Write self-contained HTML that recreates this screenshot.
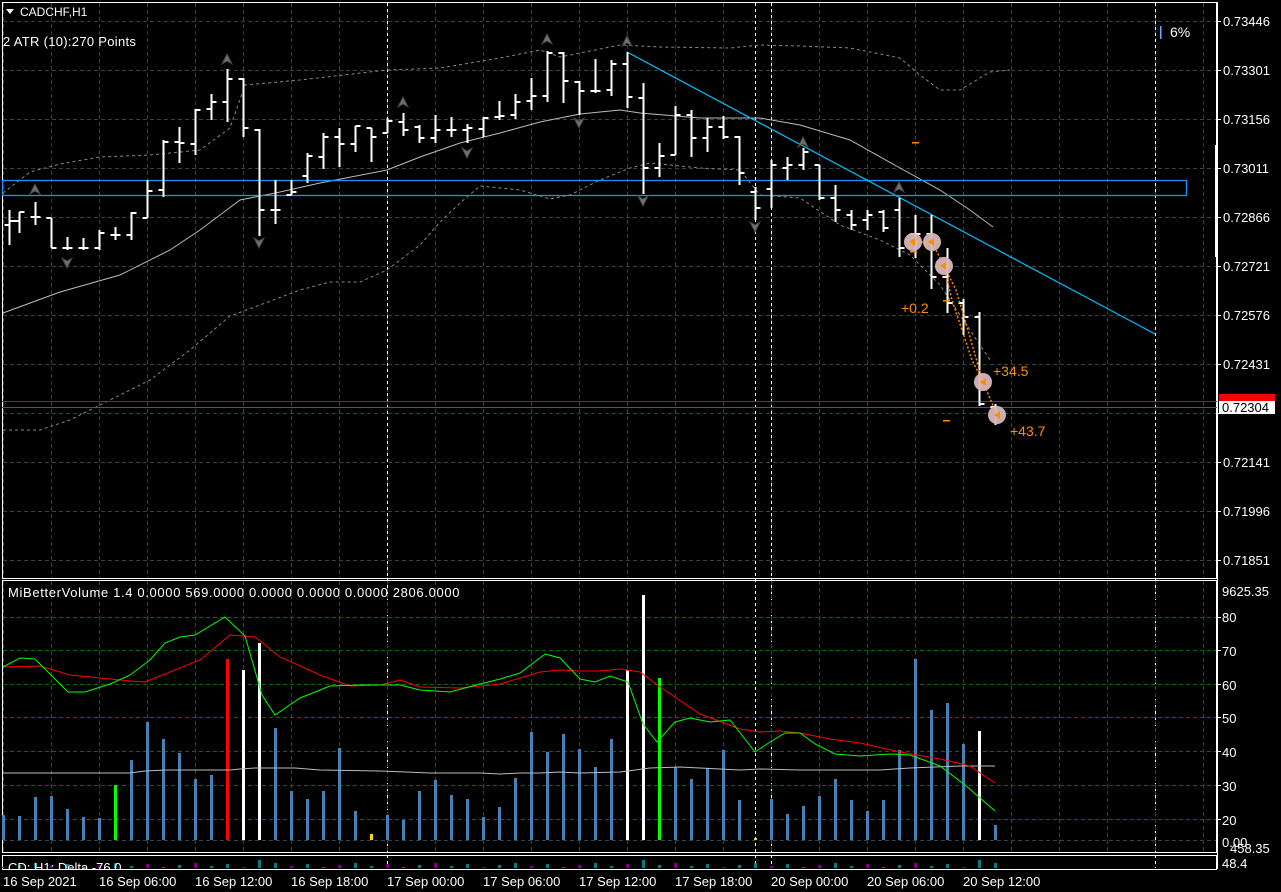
<!DOCTYPE html>
<html><head><meta charset="utf-8"><style>
html,body{margin:0;padding:0;background:#000;width:1281px;height:892px;overflow:hidden}
svg{display:block}
text{font-family:"Liberation Sans","DejaVu Sans",sans-serif;font-size:12px;fill:#fff}
</style></head><body>
<svg id="s" width="1281" height="892" viewBox="0 0 1281 892" xmlns="http://www.w3.org/2000/svg">
<rect width="1281" height="892" fill="#000"/>
<g id="grid"></g>
<rect x="2.5" y="2.5" width="1214" height="576" fill="none" stroke="#fff" stroke-width="1"/>
<rect x="2.5" y="580.5" width="1214" height="272" fill="none" stroke="#fff" stroke-width="1"/>
<rect x="2.5" y="855.5" width="1214" height="20" fill="none" stroke="#fff" stroke-width="1"/>
<rect x="0" y="869" width="1281" height="23" fill="#000"/>
<line x1="2" y1="869.5" x2="1217" y2="869.5" stroke="#fff"/>
<line x1="1217.5" y1="2" x2="1217.5" y2="869" stroke="#fff"/>
<polyline fill="none" stroke="#bbb" stroke-width="1" points="3,313 60,292 120,275 170,250 200,230 240,200 280,192 320,183 387,170 420,157 460,143 500,133 540,122 580,114 620,110 640,113 700,118 760,118 800,125 850,140 900,168 940,190 970,210 993,227"/>
<polyline fill="none" stroke="#888" stroke-width="1" stroke-dasharray="3,3" points="3,193 30,172 60,164 100,157 150,155 200,150 230,128 245,85 300,80 387,70 440,68 500,58 540,50 560,57 620,45 660,47 730,48 760,45 800,46 850,48 900,58 920,75 940,90 960,90 990,72 1010,70"/>
<polyline fill="none" stroke="#888" stroke-width="1" stroke-dasharray="3,3" points="3,430 40,430 70,420 110,400 150,380 190,350 230,316 260,305 300,290 330,282 360,282 387,270 420,245 440,222 460,203 480,186 520,190 550,199 570,195 600,180 630,168 650,163 700,168 740,170 760,195 800,198 840,225 880,240 910,255 940,285 970,330 990,360"/>
<rect x="2.5" y="180.5" width="1184" height="15" fill="none" stroke="#1e8fff" stroke-width="1.3"/>
<line x1="627" y1="52" x2="1155" y2="334" stroke="#00bfff" stroke-width="1.2"/>
<line x1="2" y1="401.5" x2="1217" y2="401.5" stroke="#e00000"/>
<line x1="2" y1="407.5" x2="1217" y2="407.5" stroke="#4a5a5a"/>
<g id="bars" stroke="#fff" stroke-width="2"></g>
<g id="arrows"></g>
<polyline fill="none" stroke="#ff8c00" stroke-width="1.5" stroke-dasharray="2,2" points="913,242 932,242 944,266 956,290 965,320 983,382 997,415"/>
<polyline fill="none" stroke="#ff8c00" stroke-width="1.5" stroke-dasharray="2,2" points="944,266 952,300 962,330 972,360 983,382"/>
<g fill="#d8b8b8" opacity="0.95">
<circle cx="913" cy="242" r="9"/><circle cx="932" cy="242" r="9"/><circle cx="944" cy="266" r="9"/><circle cx="983" cy="382" r="9"/><circle cx="997" cy="415" r="9"/>
</g>
<g fill="#ff8c00">
<path d="M909,242 l6,-4 v8z"/><path d="M928,242 l6,-4 v8z"/><path d="M940,266 l6,-4 v8z"/><path d="M980,382 l6,-4 v8z"/><path d="M994,415 l6,-4 v8z"/>
<rect x="912" y="142" width="7" height="1.5"/><rect x="943" y="420" width="7" height="1.5"/><rect x="943" y="300" width="7" height="1.5"/><rect x="910" y="251" width="7" height="1.5"/>
</g>
<text x="901" y="313" style="fill:#ff8c00;font-size:14px">+0.2</text>
<text x="993" y="376" style="fill:#ff8c00;font-size:14px">+34.5</text>
<text x="1010" y="436" style="fill:#ff8c00;font-size:14px">+43.7</text>
<path d="M6,9 h8 l-4,5z" fill="#fff"/>
<text x="20" y="16">CADCHF,H1</text>
<text x="3" y="46" style="font-size:13px;letter-spacing:0.3px">2 ATR (10):270 Points</text>
<rect x="1160" y="26" width="1.5" height="13" fill="#6af"/>
<text x="1170" y="37" style="font-size:14px">6%</text>
<rect x="1215" y="145" width="3" height="112" fill="#fff"/>
<g id="paxis"></g>
<rect x="1219" y="394" width="56" height="7" fill="#f00"/>
<rect x="1219" y="401" width="56" height="13" fill="#fff"/>
<text x="1222" y="412" style="fill:#000;font-size:13px">0.72304</text>
<g id="vgrid"></g>
<g id="vbars"></g>
<polyline fill="none" stroke="#bbb" stroke-width="1" points="3,773 130,773 145,771 165,770 200,770 230,770 240,769 255,768 295,768 320,770 380,771 430,773 480,773 500,774 520,773 540,773 560,772 580,773 620,772 650,768 680,767 700,768 720,769 740,770 760,769 800,770 880,770 910,768 960,766 995,766"/>
<polyline fill="none" stroke="#f00" stroke-width="1" points="3,667 40,666 70,675 100,678 130,681 145,682 200,660 230,635 255,637 280,657 320,675 350,686 380,685 400,680 420,687 460,688 500,684 540,672 560,670 580,671 600,671 620,669 640,672 660,687 700,714 740,729 760,732 780,731 800,733 830,739 860,743 900,752 940,759 970,766 995,783"/>
<polyline fill="none" stroke="#0f0" stroke-width="1" points="3,667 20,658 35,659 68,692 85,692 110,684 130,675 150,660 165,643 180,637 195,635 225,617 245,636 262,695 275,715 300,698 330,686 360,685 400,685 420,690 450,692 480,684 500,679 520,673 545,654 560,658 580,679 595,682 610,676 628,682 643,724 657,742 675,722 690,718 710,722 730,720 755,752 770,742 785,733 800,733 815,744 835,754 860,756 890,754 910,755 940,766 965,785 995,811"/>
<text x="8" y="597" style="font-size:13px;letter-spacing:0.65px">MiBetterVolume 1.4 0.0000 569.0000 0.0000 0.0000 0.0000 2806.0000</text>
<g id="cd"></g>
<text x="8" y="872" style="font-size:13px">CD; H1; Delta -76.0</text>
<rect x="0" y="870" width="1281" height="22" fill="#000"/>
<line x1="2" y1="869.5" x2="1217" y2="869.5" stroke="#fff"/>
<g id="taxis" style="font-size:13px">
<text x="3" y="886" style="font-size:13px">16 Sep 2021</text>
<text x="99" y="886" style="font-size:13px">16 Sep 06:00</text>
<text x="195" y="886" style="font-size:13px">16 Sep 12:00</text>
<text x="291" y="886" style="font-size:13px">16 Sep 18:00</text>
<text x="387" y="886" style="font-size:13px">17 Sep 00:00</text>
<text x="483" y="886" style="font-size:13px">17 Sep 06:00</text>
<text x="579" y="886" style="font-size:13px">17 Sep 12:00</text>
<text x="675" y="886" style="font-size:13px">17 Sep 18:00</text>
<text x="771" y="886" style="font-size:13px">20 Sep 00:00</text>
<text x="867" y="886" style="font-size:13px">20 Sep 06:00</text>
<text x="963" y="886" style="font-size:13px">20 Sep 12:00</text>
</g>
<g id="paxtext" style="font-size:13px">
<text x="1223" y="26" style="font-size:13px">0.73446</text>
<text x="1223" y="75" style="font-size:13px">0.73301</text>
<text x="1223" y="124" style="font-size:13px">0.73156</text>
<text x="1223" y="173" style="font-size:13px">0.73011</text>
<text x="1223" y="222" style="font-size:13px">0.72866</text>
<text x="1223" y="271" style="font-size:13px">0.72721</text>
<text x="1223" y="320" style="font-size:13px">0.72576</text>
<text x="1223" y="369" style="font-size:13px">0.72431</text>
<text x="1223" y="467" style="font-size:13px">0.72141</text>
<text x="1223" y="516" style="font-size:13px">0.71996</text>
<text x="1223" y="565" style="font-size:13px">0.71851</text>
<text x="1222" y="596" style="font-size:13px">9625.35</text>
<text x="1222" y="622" style="font-size:13px">80</text>
<text x="1222" y="656" style="font-size:13px">70</text>
<text x="1222" y="690" style="font-size:13px">60</text>
<text x="1222" y="723" style="font-size:13px">50</text>
<text x="1222" y="757" style="font-size:13px">40</text>
<text x="1222" y="791" style="font-size:13px">30</text>
<text x="1222" y="825" style="font-size:13px">20</text>
<text x="1222" y="847" style="font-size:13px">0.00</text>
<text x="1230" y="853" style="font-size:13px">458.35</text>
<text x="1222" y="868" style="font-size:13px">48.4</text>
</g>
</svg>
<script>
var NS="http://www.w3.org/2000/svg";
function el(p,t,a){var e=document.createElementNS(NS,t);for(var k in a)e.setAttribute(k,a[k]);document.getElementById(p).appendChild(e);return e;}
for(var x=3;x<1217;x+=48){el("grid","line",{x1:x+.5,y1:3,x2:x+.5,y2:578,stroke:"#2f4444","stroke-dasharray":"4,3"});
 el("vgrid","line",{x1:x+.5,y1:581,x2:x+.5,y2:852,stroke:"#2f4444","stroke-dasharray":"4,3"});
 el("paxis","line",{x1:x+.5,y1:869,x2:x+.5,y2:874,stroke:"#fff"});}
for(var y=21;y<578;y+=49){el("grid","line",{x1:3,y1:y+.5,x2:1216,y2:y+.5,stroke:"#2f4444","stroke-dasharray":"4,3"});el("paxis","line",{x1:1217,y1:y+.5,x2:1221,y2:y+.5,stroke:"#fff"});}
[617,650,684,717,751,785,819].forEach(function(y){el("vgrid","line",{x1:3,y1:y+.5,x2:1216,y2:y+.5,stroke:"#0a6a0a","stroke-dasharray":"4,3"});el("paxis","line",{x1:1217,y1:y+.5,x2:1221,y2:y+.5,stroke:"#fff"});});
el("vgrid","line",{x1:3,y1:840.5,x2:1216,y2:840.5,stroke:"#2f4444","stroke-dasharray":"4,3"});
[387,755,771,1155].forEach(function(x){el("grid","line",{x1:x+.5,y1:3,x2:x+.5,y2:868,stroke:"#fff","stroke-dasharray":"3,3"});});
var B=[[210,245,225,221],[212,233,221,212],[202,225,217,217],[218,248,218,248],[237,250,248,248],[238,250,248,248],[230,250,248,233],[227,240,235,235],[212,240,235,213],[180,218,218,191],[140,197,190,142],[127,163,142,143],[109,155,144,110],[94,120,109,102],[69,122,102,79],[78,137,79,128],[129,236,130,210],[180,224,210,210],[180,195,195,192],[153,183,176,156],[133,169,157,137],[128,167,137,144],[126,152,144,126],[128,162,128,137],
[118,133,133,121],[113,136,122,130],[125,143,127,138],[115,143,138,130],[117,137,130,130],[124,143,130,128],[117,137,129,118],[101,120,117,116],[94,119,115,102],[78,110,101,96],[51,102,96,53],[52,103,53,81],[81,115,82,91],[59,93,91,91],[60,96,90,64],[52,108,64,97],[83,194,98,168],[143,177,168,156],[106,155,155,115],[110,157,115,138],[118,152,138,127],[116,139,127,137],[136,185,137,173],[187,220,192,208],[160,208,189,165],
[157,180,168,165],[148,170,165,152],[165,200,165,198],[185,222,198,210],[210,230,215,225],[210,230,220,215],[210,232,212,228],[198,257,210,248],[215,258,234,234],[215,289,234,277],[248,313,277,303],[299,335,303,317],[312,406,317,404],[404,425,407,413]];
B.forEach(function(b,i){var x=3+16*i+.5;if(i==0)x=9.5;
 el("bars","line",{x1:x,y1:b[0],x2:x,y2:b[1]});
 el("bars","line",{x1:x-5,y1:b[2],x2:x,y2:b[2]});
 el("bars","line",{x1:x,y1:b[3],x2:x+5,y2:b[3]});});
[[35,190],[227,60],[403,103],[547,40],[627,42],[803,143],[899,188]].forEach(function(p){el("arrows","path",{d:"M"+p[0]+","+(p[1]-6)+" l5,10 l-5,-3 l-5,3z",fill:"#6a7480",stroke:"#554433"})});
[[67,262],[259,242],[467,152],[579,122],[643,200],[755,226]].forEach(function(p){el("arrows","path",{d:"M"+p[0]+","+(p[1]+6)+" l5,-10 l-5,3 l-5,-3z",fill:"#6a7480",stroke:"#554433"})});
var V=[815,816,797,796,809,817,818,785,760,722,739,753,779,775,659,670,643,728,791,799,791,748,811,834,815,820,791,780,795,799,817,807,778,732,752,734,749,767,739,670,595,678,767,779,768,750,800,838,799,814,806,796,779,800,811,800,750,659,710,703,744,731,825];
var C={7:"#00ff00",14:"#ff0000",15:"#fff",16:"#fff",23:"#ffd700",39:"#fff",40:"#fff",41:"#00ff00",47:"#ffd700",61:"#fff"};
V.forEach(function(t,i){var x=3+16*i;var c=C[i]||"#4682b4";
 el("vbars","rect",{x:x-1,y:t,width:3,height:840-t,fill:c});});
for(var i=0;i<63;i++){var x=3+16*i;var h=(i*7%5)+1;var c=(i%3==0)?"#800080":"#008080";if(i==16||i==40||i==61)h=8;el("cd","rect",{x:x-1,y:868-h,width:3,height:h,fill:c});}
</script>
</body></html>
